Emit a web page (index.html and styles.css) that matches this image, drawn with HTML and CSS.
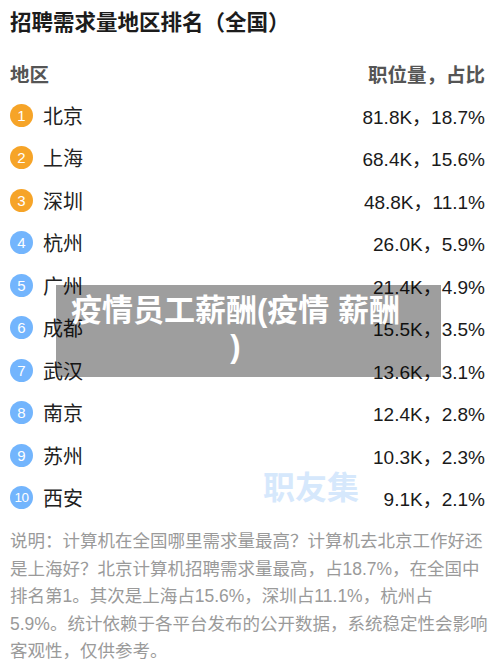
FILE: index.html
```html
<!DOCTYPE html>
<html lang="zh-CN">
<head>
<meta charset="utf-8">
<title>招聘需求量地区排名</title>
<link rel="stylesheet" href="styles.css">
</head>
<body>
<div class="page">
  <h1 class="title">招聘需求量地区排名（全国）</h1>
  <div class="head">
    <span>地区</span>
    <span>职位量，占比</span>
  </div>
  <ul class="list">
    <li class="row"><span class="badge top">1</span><span class="city">北京</span><span class="val">81.8K，18.7%</span></li>
    <li class="row"><span class="badge top">2</span><span class="city">上海</span><span class="val">68.4K，15.6%</span></li>
    <li class="row"><span class="badge top">3</span><span class="city">深圳</span><span class="val">48.8K，11.1%</span></li>
    <li class="row"><span class="badge">4</span><span class="city">杭州</span><span class="val">26.0K，5.9%</span></li>
    <li class="row"><span class="badge">5</span><span class="city">广州</span><span class="val">21.4K，4.9%</span></li>
    <li class="row"><span class="badge">6</span><span class="city">成都</span><span class="val">15.5K，3.5%</span></li>
    <li class="row"><span class="badge">7</span><span class="city">武汉</span><span class="val">13.6K，3.1%</span></li>
    <li class="row"><span class="badge">8</span><span class="city">南京</span><span class="val">12.4K，2.8%</span></li>
    <li class="row"><span class="badge">9</span><span class="city">苏州</span><span class="val">10.3K，2.3%</span></li>
    <li class="row"><span class="badge small">10</span><span class="city">西安</span><span class="val">9.1K，2.1%</span></li>
  </ul>
  <p class="note">说明：计算机在全国哪里需求量最高？计算机去北京工作好还是上海好？北京计算机招聘需求量最高，占18.7%，在全国中排名第1。其次是上海占15.6%，深圳占11.1%，杭州占5.9%。统计依赖于各平台发布的公开数据，系统稳定性会影响客观性，仅供参考。</p>
  <div class="watermark">职友集</div>
  <div class="overlay">疫情员工薪酬(疫情 薪酬<br>)</div>
</div>
</body>
</html>
```
FILE: styles.css
```css
* { box-sizing: border-box; }
html, body { margin: 0; padding: 0; background: #fff; }
body {
  font-family: "Liberation Sans", "Noto Sans CJK SC", sans-serif;
  color: #222;
  width: 500px;
  height: 663px;
  overflow: hidden;
}
.page {
  position: relative;
  padding: 0 15px 0 10px;
}
.title {
  margin: 0;
  font-size: 21.5px;
  line-height: 46px;
  font-weight: bold;
  color: #1c1c1c;
}
.head {
  margin-top: 6px;
  height: 42px;
  display: flex;
  justify-content: space-between;
  align-items: center;
  font-size: 19.5px;
  font-weight: bold;
  color: #555;
}
.list {
  list-style: none;
  margin: 0;
  padding: 0;
}
.row {
  height: 42.5px;
  display: flex;
  align-items: center;
}
.badge {
  width: 23px;
  height: 23px;
  border-radius: 50%;
  background: #73b5fd;
  color: #fff;
  font-size: 15px;
  display: flex;
  align-items: center;
  justify-content: center;
  flex: none;
}
.badge.top { background: #f6a428; }
.badge.small { font-size: 13.5px; letter-spacing: -0.5px; }
.city {
  margin-left: 10px;
  font-size: 20px;
  color: #222;
}
.val {
  margin-left: auto;
  font-size: 19px;
  color: #1a1a1a;
}
.note {
  margin: 9px 0 0;
  font-size: 17.5px;
  line-height: 27.5px;
  color: #9a9a9a;
  width: 480px;
}
.watermark {
  position: absolute;
  left: 263px;
  top: 469px;
  font-size: 32px;
  font-weight: bold;
  color: #d6e8fc;
  line-height: 38px;
}
.overlay {
  position: absolute;
  left: 56px;
  top: 285px;
  width: 385px;
  height: 92px;
  background: rgba(0, 0, 0, 0.38);
  color: #fff;
  font-size: 31px;
  font-weight: bold;
  line-height: 36px;
  text-align: center;
  padding: 8px 26px 0 0;
}
```
